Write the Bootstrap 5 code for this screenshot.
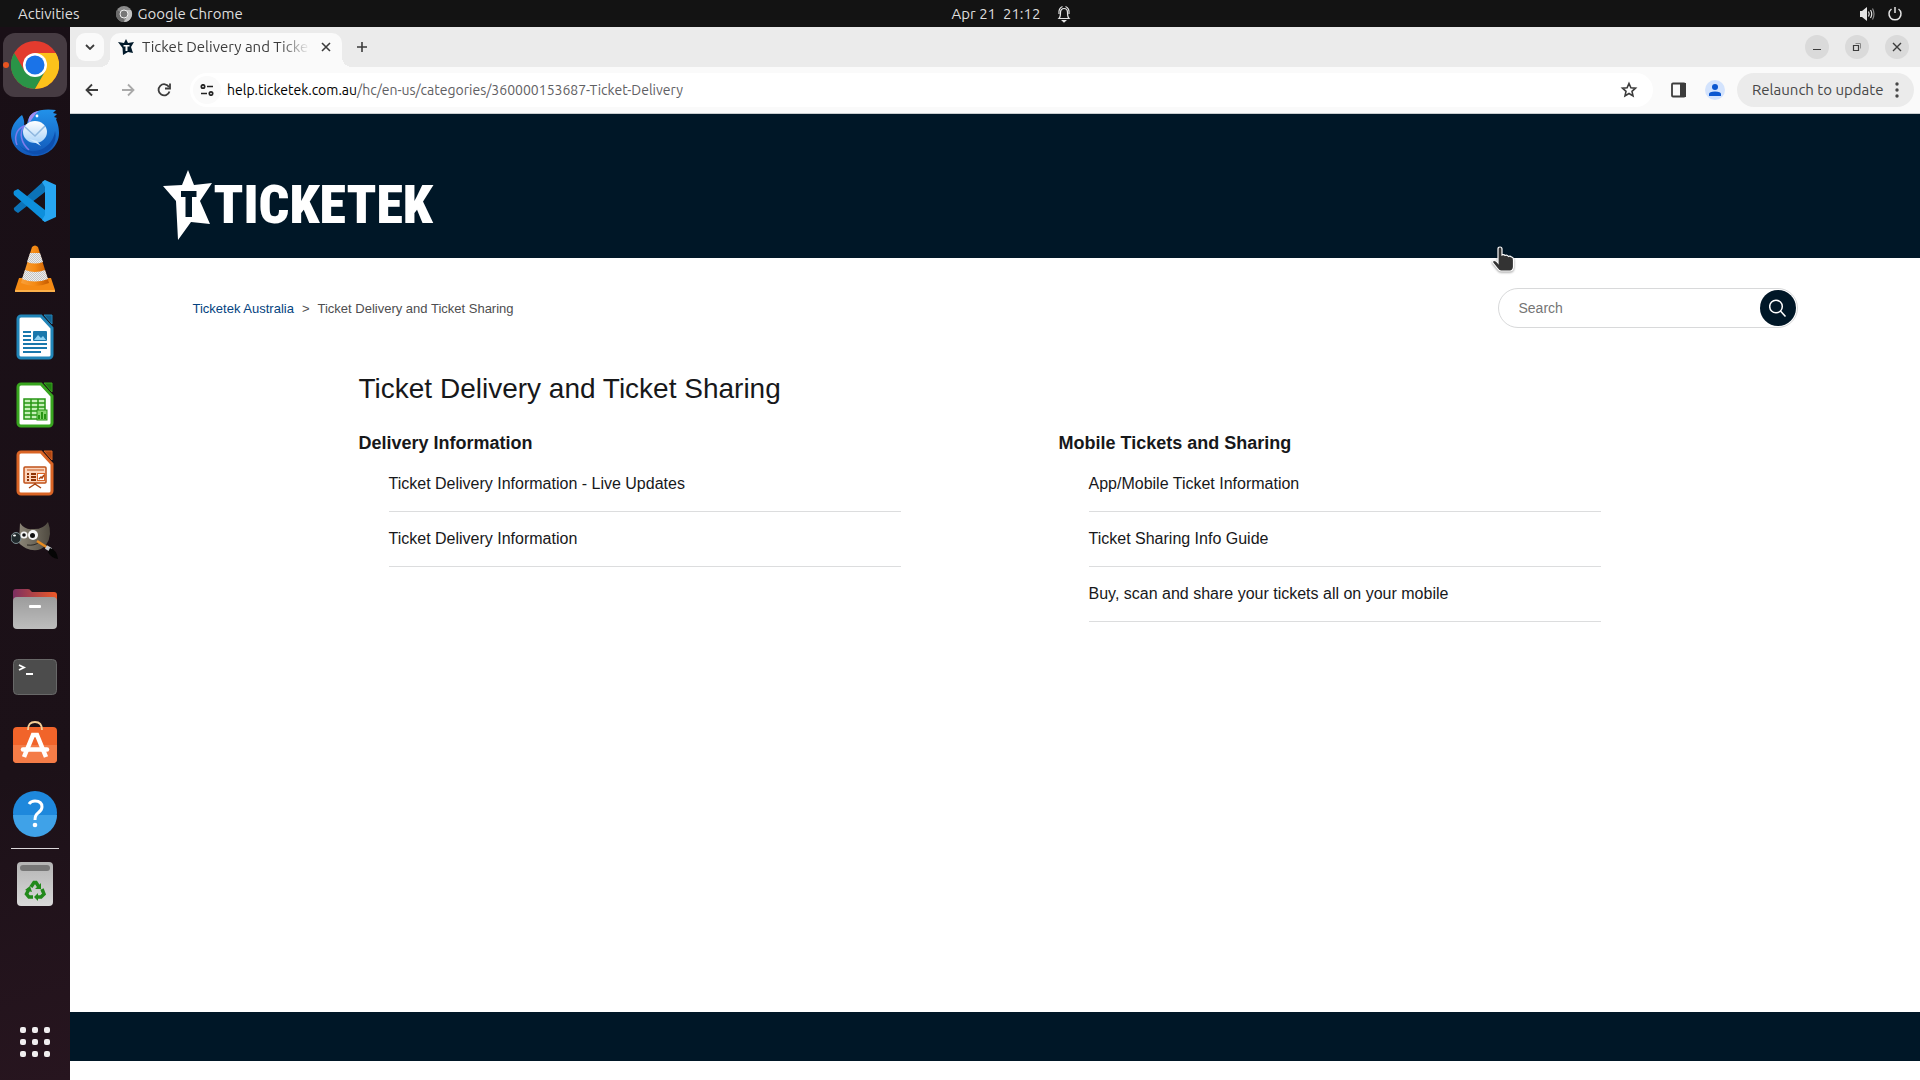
<!DOCTYPE html>
<html lang="en">
<head>
<meta charset="utf-8">
<meta name="viewport" content="width=device-width, initial-scale=1">
<title>Ticket Delivery and Ticket Sharing</title>
<link href="https://cdn.jsdelivr.net/npm/bootstrap@5.3.0/dist/css/bootstrap.min.css" rel="stylesheet">
<style>
:root { --navy: #001727; --chrome: #fafafa; --strip: #ebebeb; --ink: #3c3c3c; }
body { font-family: Ubuntu, "Noto Sans", sans-serif; font-size: 15px; line-height: 20px; }
svg { display: block; flex: none; }
button { border: 0; padding: 0; background: none; color: inherit; }
a { text-decoration: none; }
/* desktop top bar */
.topbar { height: 27px; background: #131313; color: #dedede; padding: 0 16px 0 18px; }
.topbar .lead-side { flex: 1 1 102px; gap: 36px; }
.topbar .tail-side { flex: 1 1 0; }
/* dock */
.dock { width: 70px; background: linear-gradient(165deg, #190f16 0%, #1c1118 70%, #27151f 100%); padding: 4px 0; }
.dock button { width: 70px; height: 68px; display: flex; align-items: center; justify-content: center; position: relative; }
.dock .running::before { content: ""; position: absolute; left: 3px; top: 31px; width: 6px; height: 6px; border-radius: 50%; background: #e95420; z-index: 1; }
.dock .tile { width: 64px; height: 64px; border-radius: 12px; background: #463b42; display: flex; align-items: center; justify-content: center; }
.dock hr { width: 48px; margin: 1px auto; border-top: 1px solid #dcd8da; opacity: 1; }
/* browser frame */
.strip { height: 40px; background: var(--strip); color: var(--ink); padding: 6px 11px 0 6px; }
.tabmenu { width: 28px; height: 28px; border-radius: 9px; background: var(--chrome); }
.tabcard { width: 232px; height: 34px; border-radius: 10px 10px 0 0; background: var(--chrome); padding: 0 7px 6px 8px; margin-left: 6px; position: relative; }
.tabcard::before, .tabcard::after { content: ""; position: absolute; bottom: 0; width: 10px; height: 10px; }
.tabcard::before { left: -10px; background: radial-gradient(circle at 0 0, transparent 10px, var(--chrome) 10px); }
.tabcard::after { right: -10px; background: radial-gradient(circle at 100% 0, transparent 10px, var(--chrome) 10px); }
.tabtitle { width: 168px; overflow: hidden; white-space: nowrap; -webkit-mask-image: linear-gradient(90deg, #000 138px, transparent 168px); mask-image: linear-gradient(90deg, #000 138px, transparent 168px); }
.newtab { height: 28px; margin-left: 15px; }
.wincontrols { gap: 16px; padding-top: 2px; }
.winbtn { width: 24px; height: 24px; border-radius: 50%; background: #dadada; }
.toolbar { height: 47px; background: var(--chrome); border-bottom: 1px solid #c9cdd0; padding: 0 6px 0 12px; color: var(--ink); }
.navicon { width: 20px; height: 20px; }
.omni { height: 34px; border-radius: 17px; background: #fff; padding: 0 14px 0 3px; }
.siteinfo { width: 28px; height: 28px; border-radius: 50%; background: var(--chrome); }
.address { font-size: 14px; padding-left: 6px; }
.address .path { color: #5f6063; }
.actions { gap: 18px; padding: 0 12px 0 18px; }
.relaunch { height: 34px; border-radius: 17px; background: var(--strip); padding: 0 14px 0 15px; color: #474747; width: 177px; }
/* help centre page */
.page { font-family: "Liberation Sans", Arial, sans-serif; background: #fff; color: #17181a; }
.masthead { background: var(--navy); height: 144px; padding: 38px 5% 0; }
.brand { color: #fff; gap: 2px; }
.wordmark { font-family: "Roboto Condensed", Lato, sans-serif; font-weight: 900; font-size: 54px; line-height: 64px; }
.wrap { padding: 30px calc(5% + 30px) 0; }
.crumbs { font-size: 13px; color: #4e4e50; padding-top: 1px; }
.crumbs a { color: #044380; }
.searchbox { width: 300px; height: 40px; border: 1px solid #d8d9da; border-radius: 20px; padding: 1px; }
.searchbox input { border: 0; outline: 0; background: none; font-size: 14px; padding: 0 0 0 19px; color: #333; }
.searchbox input::placeholder { color: #757575; opacity: 1; }
.searchbox button { width: 36px; height: 36px; border-radius: 50%; background: var(--navy); color: #fff; flex: none; }
.topics { padding: 40px 197px 0 166px; }
.topics h1 { font-size: 28px; line-height: 42px; margin: 0 0 20px; }
.topics h2 { font-size: 18px; line-height: 27px; font-weight: 700; margin: 0; }
.topics .cols { gap: 158px; }
.topics ul { margin: 0; padding: 0 0 0 30px; list-style: none; font-size: 16px; line-height: 24px; }
.topics li { padding: 15px 0; border-bottom: 1px solid #dcddde; }
.topics a { color: #17181a; }
.foot { height: 49px; background: var(--navy); margin-bottom: 19px; }
.pointer { position: absolute; left: 1490px; top: 244px; filter: drop-shadow(0 1px 1px #0006); }
</style>
</head>
<body class="vh-100 d-flex flex-column overflow-hidden">
<svg width="0" height="0" class="position-absolute">
  <defs>
    <symbol id="star" viewBox="0 0 49 70"><path fill="currentColor" fill-rule="evenodd" d="M25 0 31 15 49 13 37 31 47 54 28 52 15 70 13 31 0 16 19 15ZM18 21V27H22.500V47H29V27H33.500V21Z"/></symbol>
    <linearGradient id="gblue" x2="0" y2="1"><stop stop-color="#2292ea"/><stop offset="1" stop-color="#1257b8"/></linearGradient>
    <linearGradient id="gmail" x2="0" y2="1"><stop stop-color="#fff"/><stop offset="1" stop-color="#a9d3f8"/></linearGradient>
    <linearGradient id="gcone" x2="1"><stop stop-color="#f9a03a"/><stop offset=".5" stop-color="#f58a14"/><stop offset="1" stop-color="#c55a00"/></linearGradient>
    <linearGradient id="gfile" x2="1"><stop stop-color="#7b2f61"/><stop offset="1" stop-color="#ee5a28"/></linearGradient>
    <linearGradient id="ggrey" x2="0" y2="1"><stop stop-color="#9c9c9c"/><stop offset="1" stop-color="#bdbdbd"/></linearGradient>
    <linearGradient id="gtrash" x2="0" y2="1"><stop stop-color="#b4b4b4"/><stop offset="1" stop-color="#d9d9d9"/></linearGradient>
    <linearGradient id="gfur" x2="1"><stop stop-color="#8b8577"/><stop offset="1" stop-color="#4f4a40"/></linearGradient>
    <pattern id="weave" width="2" height="2" patternUnits="userSpaceOnUse"><rect width="2" height="2" fill="#eee"/><rect width="1" height="1" fill="#c4c4c4"/><rect x="1" y="1" width="1" height="1" fill="#c4c4c4"/></pattern>
  </defs>
</svg>

<div class="topbar d-flex align-items-center">
  <div class="lead-side d-flex align-items-center">
    <button>Activities</button>
    <button class="d-flex align-items-center gap-1">
      <svg width="18" height="16" viewBox="0 0 18 16"><circle cx="8" cy="8" r="8" fill="#8c8c8c"/><path d="M8 8 1 4A8 8 0 0 0 8 16Z" fill="#6b6b6b"/><path d="M8 4H15A8 8 0 0 1 8 16L12 9Z" fill="#c2c2c2"/><circle cx="8" cy="8" r="4" fill="#777" stroke="#f0f0f0"/></svg>
      <span>Google Chrome</span>
    </button>
  </div>
  <div class="d-flex align-items-center gap-3">
    <span>Apr 21&nbsp; 21:12</span>
    <svg width="16" height="18" viewBox="0 0 16 18" fill="none" stroke="#e4e4e4" stroke-width="1.200"><path d="M3 13.500C4.500 12 4.500 10 4.500 7.500 4.500 5 6 3.500 8 3.500S11.500 5 11.500 7.500C11.500 10 11.500 12 13 13.500Z"/><path d="M6.500 15.500H9.500L8 17Z" fill="#e4e4e4"/><path d="M3 9C2.500 5 4 2.500 6.500 1.500M13 9C13.500 5 12 2.500 9.500 1.500"/></svg>
  </div>
  <div class="tail-side d-flex align-items-center justify-content-end gap-2">
    <svg width="20" height="16" viewBox="0 0 20 16" fill="none" stroke="#e4e4e4" stroke-width="1.200"><path d="M2 5H4L9 1V15L4 11H2Z" fill="#e4e4e4" stroke="none"/><path d="M10.500 5.500Q12 8 10.500 10.500M12.500 4Q15 8 12.500 12"/><path d="M14.500 2.500Q17.500 8 14.500 13.500" stroke="#8a8a8a"/></svg>
    <svg width="18" height="16" viewBox="0 0 18 16" fill="none" stroke="#e4e4e4" stroke-width="1.500"><path d="M5.500 3A6 6 0 1 0 12.500 3M9 1V7"/></svg>
  </div>
</div>

<div class="d-flex flex-grow-1 overflow-hidden">
  <nav class="dock d-flex flex-column flex-shrink-0" aria-label="Dock">
    <button class="running" aria-label="Chrome"><span class="tile"><svg width="48" height="48" viewBox="0 0 48 48"><circle cx="24" cy="24" r="24" fill="#e33b2e"/><path d="M3.200 12A24 24 0 0 0 24 48L34.400 30 13.600 30Z" fill="#2a9447"/><path d="M24 12H44.800A24 24 0 0 1 24 48L34.400 30Z" fill="#fcc21b"/><circle cx="24" cy="24" r="12" fill="#fff"/><circle cx="24" cy="24" r="9.500" fill="#1a73e8"/></svg></span></button>
    <button aria-label="Thunderbird"><svg width="48" height="48" viewBox="0 0 48 48"><path d="M11 6C7 9 0 16 0 25 0 38 11 47 24 47S48 37 48 24C48 17 46 13 45 10L46 9 43 8 46 5 42 4 45 1C38 0 28 0 22 4 18 7 17 11 16 15L13 17C14 12 12 8 11 6Z" fill="url(#gblue)"/><path d="M18 14C16 9 20 3 28 2 23 5 22 10 18 14Z" fill="#a08cf0"/><path d="M6 36C3 29 5 20 13 17 8 24 10 34 18 41" fill="none" stroke="#7d7cec" stroke-width="1.500"/><path d="M8 36C20 49 42 40 44 22 49 42 23 55 8 36Z" fill="#0d4fae"/><ellipse cx="24" cy="23" rx="12" ry="11" fill="url(#gmail)"/><path d="M18 30 30 37 26 32Z" fill="#d5ebff"/><path d="M14 18 24 27 34 17" fill="none" stroke="#8eb7df" stroke-width="1.500"/><circle cx="26" cy="7" r="1.400" fill="#fff"/></svg></button>
    <button aria-label="Code"><svg width="48" height="48" viewBox="0 0 48 48"><path d="M34 3 4 30C2 31 3 33 4 34L7 36 34 15Z" fill="#0c73b8"/><path d="M3 14 7 12 34 33V45L3 18Q2 16 3 14Z" fill="#0d8fdc"/><path d="M34 3 45 8V40L34 45 31 43 34 38V10L31 5Z" fill="#27a6f2"/></svg></button>
    <button aria-label="VLC"><svg width="48" height="48" viewBox="0 0 48 48"><path d="M8 33H40L44 45V46H4V45Z" fill="#f58a14"/><path d="M4 45H44V47H4Z" fill="#fbb04a"/><path d="M21 2Q24 -1 27 2L38 38Q24 44 10 38Z" fill="url(#gcone)"/><path d="M19 8H29L32 17Q24 20 16 17ZM14 25Q24 29 34 25L37 34Q24 39 11 34Z" fill="url(#weave)"/></svg></button>
    <button aria-label="Writer"><svg width="48" height="48" viewBox="0 0 48 48"><path d="M10 3H30L41 15V42A3 3 0 0 1 38 45H10A3 3 0 0 1 7 42V6A3 3 0 0 1 10 3Z" fill="#fff" stroke="#2185b8" stroke-width="3"/><path d="M33 2H41V11Z" fill="#12618f" stroke="#2185b8"/><g fill="#1a78ac"><path d="M12 18H20V20H12ZM12 22H20V24H12ZM12 26H20V28H12ZM12 30H36V32H12ZM12 34H36V36H12ZM12 38H30V40H12Z"/><rect x="22" y="18" width="14" height="10" rx="1"/></g><path d="M23 27 27 22 30 25 32 23 35 27Z" fill="#8ed2f3"/></svg></button>
    <button aria-label="Calc"><svg width="48" height="48" viewBox="0 0 48 48"><path d="M10 3H30L41 15V42A3 3 0 0 1 38 45H10A3 3 0 0 1 7 42V6A3 3 0 0 1 10 3Z" fill="#fff" stroke="#38a51f" stroke-width="3"/><path d="M33 2H41V11Z" fill="#1f7d10" stroke="#38a51f"/><path d="M13 18H34V38H13Z" fill="#c6f0b8" stroke="#279514" stroke-width="1.500"/><path d="M13 22H34M13 26H34M13 30H34M13 34H34M20 18V38M27 18V38" stroke="#279514" stroke-width="1.500"/><rect x="26" y="29" width="10" height="10" fill="#86d76e" stroke="#279514"/><path d="M28 34V38M31 31V38M34 33V38" stroke="#279514" stroke-width="2"/></svg></button>
    <button aria-label="Impress"><svg width="48" height="48" viewBox="0 0 48 48"><path d="M10 3H30L41 15V42A3 3 0 0 1 38 45H10A3 3 0 0 1 7 42V6A3 3 0 0 1 10 3Z" fill="#fff" stroke="#d96425" stroke-width="3"/><path d="M33 2H41V11Z" fill="#ad4512" stroke="#d96425"/><rect x="13" y="18" width="22" height="16" rx="1" fill="#fbd5bd" stroke="#c0521a" stroke-width="1.500"/><path d="M16 21H33" stroke="#c0521a"/><path d="M16 25H18M16 28H18M16 31H18M20 25H25M20 28H25M20 31H25" stroke="#8f3306" stroke-width="2"/><rect x="26.500" y="24.500" width="7" height="7" fill="#fff" stroke="#d96425"/><path d="M28 30 30 28 31 29 33 26M24 34V36M24 35 18 39M24 35 30 39" stroke="#a8420e" stroke-width="1.500" fill="none"/></svg></button>
    <button aria-label="GIMP"><svg width="48" height="48" viewBox="0 0 48 48"><path d="M9 6Q14 13 21 12 32 13 37 5 42 18 35 28C28 37 14 33 8 26Z" fill="url(#gfur)"/><ellipse cx="5" cy="21" rx="5" ry="5.500" fill="#20282b" stroke="#7f8f94"/><ellipse cx="3.500" cy="18.500" rx="1.500" ry="1" fill="#fff"/><circle cx="13" cy="18" r="3.500" fill="#f6f6f6"/><circle cx="22" cy="18" r="5" fill="#f6f6f6"/><circle cx="13" cy="18" r="1.800" fill="#111"/><circle cx="21.500" cy="18.500" r="2.500" fill="#111"/><path d="M16 28Q24 29 28 25" stroke="#2b2722" fill="none"/><path d="M26 24 37 31" stroke="#e88b20" stroke-width="2.500"/><path d="M35 30 40 33" stroke="#c9cdd0" stroke-width="4"/><path d="M39 31Q46 33 47 42 40 41 37 35Z" fill="#050505"/></svg></button>
    <button aria-label="Files"><svg width="48" height="48" viewBox="0 0 48 48"><path d="M2 16V7Q2 4 5 4H17Q19 4 20 6L21 7H43Q46 7 46 10V16Z" fill="url(#gfile)"/><rect x="2" y="12" width="44" height="32" rx="4" fill="url(#ggrey)"/><rect x="18" y="20" width="12" height="3" rx="1" fill="#fff"/></svg></button>
    <button aria-label="Terminal"><svg width="48" height="48" viewBox="0 0 48 48"><rect x="2.500" y="6.500" width="43" height="35" rx="4" fill="#4c4c4c" stroke="#686868"/><path d="M8 12 13 14.500 8 17M15 21H22" stroke="#fff" stroke-width="1.800" fill="none"/></svg></button>
    <button aria-label="Software"><svg width="48" height="48" viewBox="0 0 48 48"><rect x="2" y="6" width="44" height="36" rx="4" fill="#f1642a"/><path d="M2 24H46V38Q46 42 42 42H6Q2 42 2 38Z" fill="#f47c47"/><path d="M17 9Q17 1 24 1T31 9" fill="none" stroke="#f5cf98" stroke-width="1.800"/><path d="M13 36 22 14H26L35 36" fill="none" stroke="#fff" stroke-width="4.500"/><path d="M12 28.500H36" stroke="#fff" stroke-width="4.500" stroke-linecap="round"/></svg></button>
    <button aria-label="Help"><svg width="48" height="48" viewBox="0 0 48 48"><circle cx="24" cy="24" r="22" fill="#1e88dc"/><path d="M2 26H46A22 22 0 0 1 2 26Z" fill="#3fa2e8"/><path d="M18 15Q20 12 24 12 31 12 31 18 31 21 27 24 24 26 24 31" fill="none" stroke="#fff" stroke-width="3"/><circle cx="24" cy="36" r="2.300" fill="#fff"/></svg></button>
    <hr>
    <button aria-label="Trash"><svg width="48" height="48" viewBox="0 0 48 48"><rect x="6" y="2" width="36" height="44" rx="4" fill="url(#gtrash)"/><rect x="9" y="5" width="30" height="6" rx="3" fill="#777"/><g fill="none" stroke="#22891b" stroke-width="3.500"><path d="M20 27 23 22.500H25L28 27M31 29 33 34 30 37H26M22 37H18L15.500 34 18 29"/></g><path d="M30 23V29H24ZM27 33V41L23 37ZM14 30 19 26 21 32Z" fill="#22891b"/></svg></button>
    <button class="mt-auto" aria-label="Show applications"><svg width="30" height="30" viewBox="0 0 30 30" fill="#f0eeef"><rect width="6" height="6" rx="2"/><rect x="12" width="6" height="6" rx="2"/><rect x="24" width="6" height="6" rx="2"/><rect y="12" width="6" height="6" rx="2"/><rect x="12" y="12" width="6" height="6" rx="2"/><rect x="24" y="12" width="6" height="6" rx="2"/><rect y="24" width="6" height="6" rx="2"/><rect x="12" y="24" width="6" height="6" rx="2"/><rect x="24" y="24" width="6" height="6" rx="2"/></svg></button>
  </nav>

  <div class="d-flex flex-column flex-grow-1 overflow-hidden">
    <div class="strip d-flex">
      <button class="tabmenu d-flex align-items-center justify-content-center" aria-label="Search tabs"><svg width="10" height="6" viewBox="0 0 10 6" fill="none" stroke="currentColor" stroke-width="1.800"><path d="M1 1 5 5 9 1"/></svg></button>
      <div class="tabcard d-flex align-items-center">
        <svg width="16" height="16" viewBox="0 0 16 16"><path fill="#021a2b" fill-rule="evenodd" d="M8 0 10 4 16 3 13 8 15 14 10 13 5 16 4.500 9 0 3 6 4ZM5.500 6V7.500H7.500V12H9.500V7.500H11.500V6Z"/></svg>
        <span class="tabtitle ms-2">Ticket Delivery and Ticket Sharing</span>
        <button class="ms-auto p-1" aria-label="Close tab"><svg width="10" height="10" viewBox="0 0 10 10" stroke="currentColor" stroke-width="1.600"><path d="M1 1 9 9M9 1 1 9"/></svg></button>
      </div>
      <button class="newtab" aria-label="New tab"><svg width="10" height="10" viewBox="0 0 10 10" stroke="currentColor" stroke-width="1.600"><path d="M0 5H10M5 0V10"/></svg></button>
      <div class="wincontrols ms-auto d-flex">
        <button class="winbtn d-flex align-items-center justify-content-center" aria-label="Minimize"><svg width="10" height="10" viewBox="0 0 10 10" stroke="currentColor"><path d="M1 7.500H9"/></svg></button>
        <button class="winbtn d-flex align-items-center justify-content-center" aria-label="Restore"><svg width="10" height="10" viewBox="0 0 10 10" fill="none" stroke="currentColor"><path d="M1.500 3.500H6.500V8.500H1.500Z" stroke-width="1.200"/><path d="M3.500 1.500H8.500V6.500" stroke="#888"/></svg></button>
        <button class="winbtn d-flex align-items-center justify-content-center" aria-label="Close"><svg width="10" height="10" viewBox="0 0 10 10" stroke="currentColor" stroke-width="1.400"><path d="M1 1 9 9M9 1 1 9"/></svg></button>
      </div>
    </div>

    <div class="toolbar d-flex align-items-center">
      <div class="d-flex gap-3">
        <button aria-label="Back"><svg class="navicon" viewBox="0 0 20 20" fill="none" stroke="currentColor" stroke-width="1.800"><path d="M16 10H5M10 4.500 4.500 10 10 15.500"/></svg></button>
        <button aria-label="Forward"><svg class="navicon" viewBox="0 0 20 20" fill="none" stroke="#a9a9a9" stroke-width="1.800"><path d="M4 10H15M10 4.500 15.500 10 10 15.500"/></svg></button>
        <button aria-label="Reload"><svg class="navicon" viewBox="0 0 20 20" fill="none" stroke="currentColor" stroke-width="1.800"><path d="M15 7A5.600 5.600 0 1 0 15.500 11.500"/><path d="M16 3.500V8.500H11"/></svg></button>
      </div>
      <div class="omni d-flex align-items-center flex-grow-1 ms-3">
        <button class="siteinfo d-flex align-items-center justify-content-center" aria-label="Site information"><svg width="14" height="12" viewBox="0 0 14 12" fill="none" stroke="#222" stroke-width="1.700"><path d="M7 2.500H13M1 9.500H7"/><circle cx="3" cy="2.500" r="1.700"/><circle cx="11" cy="9.500" r="1.700"/></svg></button>
        <div class="address text-nowrap"><span class="text-black">help.ticketek.com.au</span><span class="path">/hc/en-us/categories/360000153687-Ticket-Delivery</span></div>
        <button class="ms-auto" aria-label="Bookmark"><svg width="20" height="20" viewBox="0 0 20 20" fill="none" stroke="currentColor" stroke-width="1.600"><path d="M10 3.500 11.900 7.800 16.500 8.200 13 11.300 14 15.900 10 13.500 6 15.900 7 11.300 3.500 8.200 8.100 7.800Z"/></svg></button>
      </div>
      <div class="actions d-flex align-items-center">
        <button aria-label="Side panel"><svg width="16" height="16" viewBox="0 0 16 16"><rect x="1" y="1.500" width="13" height="13" rx="1" fill="none" stroke="currentColor" stroke-width="1.800"/><path d="M9 1H15V15H9Z" fill="currentColor"/></svg></button>
        <button aria-label="Profile"><svg width="20" height="20" viewBox="0 0 20 20"><circle cx="10" cy="10" r="10" fill="#d3e3fd"/><circle cx="10" cy="7" r="3" fill="#0b57d0"/><path d="M4 16V14Q4 11.500 10 11.500T16 14V16Z" fill="#0b57d0"/></svg></button>
      </div>
      <button class="relaunch d-flex align-items-center justify-content-between text-nowrap flex-shrink-0"><span>Relaunch to update</span><svg width="6" height="16" viewBox="0 0 6 16" fill="currentColor"><circle cx="3" cy="2" r="1.700"/><circle cx="3" cy="8" r="1.700"/><circle cx="3" cy="14" r="1.700"/></svg></button>
    </div>

    <div class="page d-flex flex-column flex-grow-1">
      <header class="masthead d-flex align-items-center">
        <a href="#" class="brand d-flex align-items-center" aria-label="Ticketek home"><svg width="49" height="70"><use href="#star"/></svg><span class="wordmark">TICKETEK</span></a>
      </header>
      <main class="wrap flex-grow-1">
        <div class="d-flex align-items-center justify-content-between">
          <nav class="crumbs d-flex gap-2" aria-label="Breadcrumb"><a href="#">Ticketek Australia</a><span>&gt;</span><span>Ticket Delivery and Ticket Sharing</span></nav>
          <form class="searchbox d-flex" role="search">
            <input type="search" class="flex-grow-1" placeholder="Search" aria-label="Search">
            <button type="button" class="d-flex align-items-center justify-content-center" aria-label="Submit search"><svg width="18" height="18" viewBox="0 0 18 18" fill="none" stroke="currentColor" stroke-width="1.500"><circle cx="7" cy="7.500" r="6.300"/><path d="M11.500 12 16.500 17.500"/></svg></button>
          </form>
        </div>
        <div class="topics">
          <h1>Ticket Delivery and Ticket Sharing</h1>
          <div class="cols d-flex">
            <section class="flex-fill w-50">
              <h2>Delivery Information</h2>
              <ul>
                <li><a href="#">Ticket Delivery Information - Live Updates</a></li>
                <li><a href="#">Ticket Delivery Information</a></li>
              </ul>
            </section>
            <section class="flex-fill w-50">
              <h2>Mobile Tickets and Sharing</h2>
              <ul>
                <li><a href="#">App/Mobile Ticket Information</a></li>
                <li><a href="#">Ticket Sharing Info Guide</a></li>
                <li><a href="#">Buy, scan and share your tickets all on your mobile</a></li>
              </ul>
            </section>
          </div>
        </div>
      </main>
      <footer class="foot"></footer>
    </div>
  </div>
</div>

<svg class="pointer" width="26" height="32" viewBox="0 0 26 32"><path d="M8 5Q8 3 10 3T12 5V11Q14 10 15 11.500 17 10.500 18.500 12.500 20 11.500 21.500 13 23.500 13 23.500 16V23Q23 27 20 27H11Q9 27 7 24L3 19Q2 16.500 4 16.500T8 19Z" fill="#333" stroke="#fff" stroke-width="1.200"/></svg>
<script src="https://cdn.jsdelivr.net/npm/bootstrap@5.3.0/dist/js/bootstrap.bundle.min.js"></script>
</body>
</html>
